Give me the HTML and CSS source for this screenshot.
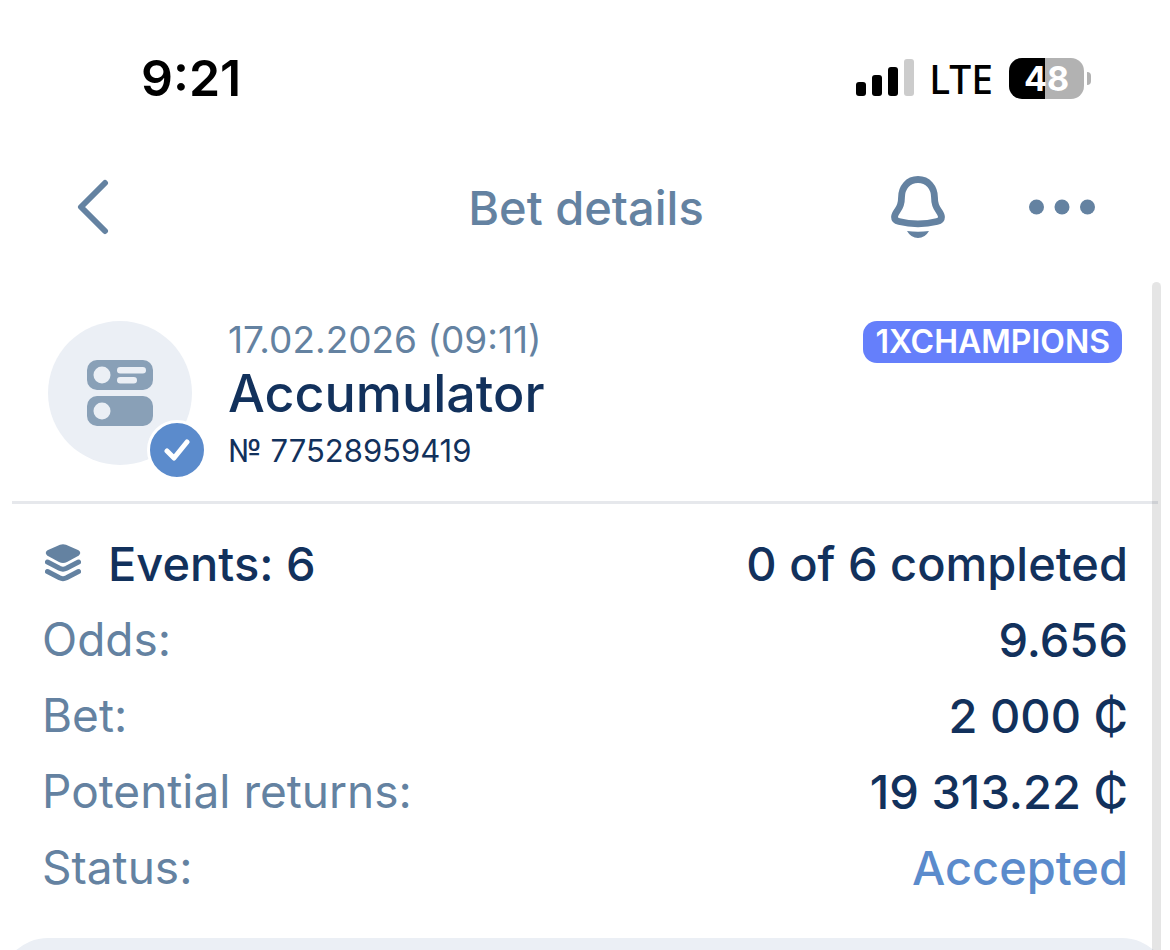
FILE: index.html
```html
<!DOCTYPE html>
<html lang="en">
<head>
	<meta charset="utf-8">
	<meta name="viewport" content="width=device-width, initial-scale=1">
	<title>Bet details</title>
	<link rel="stylesheet" href="styles.css">
</head>
<body>
	<div class="status-bar">
		<span class="clock">9:21</span>
		<div class="status-icons">
			<svg class="signal" viewBox="0 0 58 38" aria-hidden="true">
				<rect x="0" y="23" width="10" height="14" rx="3"/>
				<rect x="16" y="16" width="10" height="21" rx="3"/>
				<rect x="32" y="8" width="10" height="29" rx="3"/>
				<rect x="48" y="0" width="10" height="37" rx="3" fill="#cccccc"/>
			</svg>
			<span class="network">LTE</span>
			<span class="battery">48</span>
		</div>
	</div>

	<header class="nav">
		<button class="icon-btn back" type="button" aria-label="Back">
			<svg width="32" height="56" viewBox="0 0 32 56" fill="none" stroke="currentColor" stroke-width="6" stroke-linecap="round" stroke-linejoin="round"><path d="M28 4L4 28l24 24"/></svg>
		</button>
		<h1 class="nav-title">Bet details</h1>
		<div class="nav-actions">
			<button class="icon-btn" type="button" aria-label="Notifications">
				<svg width="54" height="62" viewBox="0 0 54 62">
					<path d="M27 3.500C17 3.500 10.500 11.500 10.500 21.500C10.500 28 9.500 30.500 6.500 34.500C4 38 3.500 39.500 3.500 41C3.500 43.500 5 44.800 8 45.500C14 47 20.500 47.800 27 47.800C33.500 47.800 40 47 46 45.500C49 44.800 50.500 43.500 50.500 41C50.500 39.500 50 38 47.500 34.500C44.500 30.500 43.500 28 43.500 21.500C43.500 11.500 37 3.500 27 3.500Z" fill="none" stroke="currentColor" stroke-width="6.800" stroke-linejoin="round"/>
					<path d="M16 55Q27 56.500 38 55Q34 62 27 62Q20 62 16 55Z" fill="currentColor"/>
				</svg>
			</button>
			<button class="icon-btn" type="button" aria-label="More">
				<svg width="66" height="16" viewBox="0 0 66 16" fill="currentColor"><circle cx="7.500" cy="8" r="7.500"/><circle cx="33" cy="8" r="7.500"/><circle cx="58.500" cy="8" r="7.500"/></svg>
			</button>
		</div>
	</header>

	<main class="content">
		<section class="summary">
			<div class="avatar">
				<svg width="66" height="66" viewBox="0 0 66 66" aria-hidden="true">
					<g fill="#89a0b7"><rect width="66" height="30" rx="10"/><rect y="36" width="66" height="30" rx="10"/></g>
					<g fill="#ebeff5"><circle cx="15" cy="15" r="8.500"/><circle cx="15" cy="51" r="8.500"/><rect x="30" y="7" width="29" height="6.500" rx="3.250"/><rect x="30" y="17" width="20" height="6.500" rx="3.250"/></g>
				</svg>
				<span class="avatar-check">
					<svg width="28" height="22" viewBox="0 0 28 22" fill="none" stroke="#ffffff" stroke-width="5" stroke-linecap="round" stroke-linejoin="round" aria-hidden="true"><path d="M4 12l7 7L24 3"/></svg>
				</span>
			</div>
			<div class="summary-text">
				<time class="date">17.02.2026 (09:11)</time>
				<h2 class="bet-type">Accumulator</h2>
				<span class="number">№ 77528959419</span>
			</div>
			<span class="tag">1XCHAMPIONS</span>
		</section>

		<dl class="details">
			<div class="row">
				<dt class="events">
					<svg width="36" height="38" viewBox="0 0 36 38" aria-hidden="true">
						<path d="M15 0.800Q18 -0.500 21 0.800L33.500 6.300Q37 9 33.500 11.700L22 17.900Q18 20 14 17.900L2.500 11.700Q-1 9 2.500 6.300Z" fill="#6482a1"/>
						<path d="M2.500 18L14.500 24.300Q18 26 21.500 24.300L33.500 18M2.500 27.500L14.500 33.800Q18 35.500 21.500 33.800L33.500 27.500" fill="none" stroke="#6482a1" stroke-width="5" stroke-linecap="round"/>
					</svg>
					Events: 6
				</dt>
				<dd>0 of 6 completed</dd>
			</div>
			<div class="row"><dt>Odds:</dt><dd>9.656</dd></div>
			<div class="row"><dt>Bet:</dt><dd>2 000 ₵</dd></div>
			<div class="row"><dt>Potential returns:</dt><dd>19 313.22 ₵</dd></div>
			<div class="row"><dt>Status:</dt><dd class="accepted">Accepted</dd></div>
		</dl>

		<section class="panel" aria-label="Events"></section>
		<div class="scrollbar"></div>
	</main>
</body>
</html>
```
FILE: styles.css
```css
* {
	box-sizing: border-box;
}

body {
	margin: 0;
	height: 100vh;
	display: flex;
	flex-direction: column;
	background: #ffffff;
	color: #12315c;
	font-family: Inter, "Liberation Sans", sans-serif;
}

h1, h2, dl, dd {
	margin: 0;
	font-weight: 500;
}

/* status bar */
.status-bar {
	display: flex;
	flex: none;
	justify-content: space-between;
	align-items: center;
	height: 156px;
	padding: 0 80px 0 141px;
	color: #000000;
}

.clock {
	font-size: 50px;
	font-weight: 600;
}

.status-icons {
	display: flex;
	align-items: center;
}

.signal {
	width: 58px;
	height: 38px;
	margin-right: 15px;
}

.network {
	margin-right: 16px;
	font-family: "Noto Sans", sans-serif;
	font-size: 39px;
	font-weight: 500;
}

.battery {
	position: relative;
	width: 75px;
	height: 41px;
	margin-right: 6px;
	border-radius: 13px;
	background: linear-gradient(to right, #000000 48%, #b2b2b2 48%);
	color: #ffffff;
	font-size: 34px;
	font-weight: 700;
	line-height: 41px;
	text-align: center;
}

.battery::after {
	content: "";
	position: absolute;
	top: 14px;
	right: -7px;
	width: 4px;
	height: 13px;
	border-radius: 0 4px 4px 0;
	background: #b2b2b2;
}

/* navigation */
.nav {
	display: grid;
	flex: none;
	grid-template-columns: 1fr auto 1fr;
	align-items: center;
	height: 102px;
	padding: 0 75px 0 77px;
	color: #6482a1;
}

.nav-title {
	font-size: 47px;
}

.nav-actions {
	display: flex;
	justify-content: flex-end;
	align-items: center;
	gap: 84px;
}

.icon-btn {
	display: flex;
	padding: 0;
	border: 0;
	background: none;
	color: inherit;
	cursor: pointer;
}

/* content */
.content {
	position: relative;
	flex: 1;
	min-height: 0;
	display: flex;
	flex-direction: column;
	padding-top: 63px;
	overflow: hidden;
}

.summary {
	display: flex;
	flex: none;
	align-items: flex-start;
	margin: 0 12px;
	padding: 0 36px 28px;
	border-bottom: 3px solid #e6e8ec;
}

.avatar {
	position: relative;
	display: flex;
	align-items: center;
	justify-content: center;
	flex: none;
	width: 144px;
	height: 144px;
	border-radius: 50%;
	background: #ebeff5;
}

.avatar-check {
	position: absolute;
	right: -15px;
	bottom: -15px;
	display: flex;
	align-items: center;
	justify-content: center;
	width: 60px;
	height: 60px;
	border: 3px solid #ffffff;
	border-radius: 50%;
	background: #5b8bcc;
}

.summary-text {
	display: flex;
	flex-direction: column;
	flex: 1;
	padding-left: 36px;
}

.date {
	color: #6482a1;
	font-size: 37px;
	line-height: 38px;
}

.bet-type {
	font-size: 52px;
	line-height: 70px;
}

.number {
	font-size: 31px;
	line-height: 44px;
}

.tag {
	padding: 0 12px;
	border-radius: 14px;
	background: #657ffb;
	color: #ffffff;
	font-size: 32px;
	font-weight: 600;
	line-height: 42px;
}

.details {
	flex: none;
	padding: 21px 42px 33px;
	font-size: 47px;
}

.row {
	display: flex;
	justify-content: space-between;
	align-items: center;
	height: 76px;
}

.row dt {
	color: #6482a1;
	font-size: 46px;
	font-weight: 400;
}

.row .events {
	display: flex;
	align-items: center;
	gap: 27px;
	padding-left: 3px;
	color: #12315c;
	font-size: 47px;
	font-weight: 500;
}

.row .accepted {
	color: #5b8bcc;
}

.panel {
	flex: 1 0 96px;
	border-radius: 48px 48px 0 0;
	background: #ebeff5;
}

.scrollbar {
	position: absolute;
	top: 24px;
	right: 9px;
	bottom: 0;
	width: 9px;
	border-radius: 5px 5px 0 0;
	background: rgba(0, 0, 0, 0.1);
}
```
